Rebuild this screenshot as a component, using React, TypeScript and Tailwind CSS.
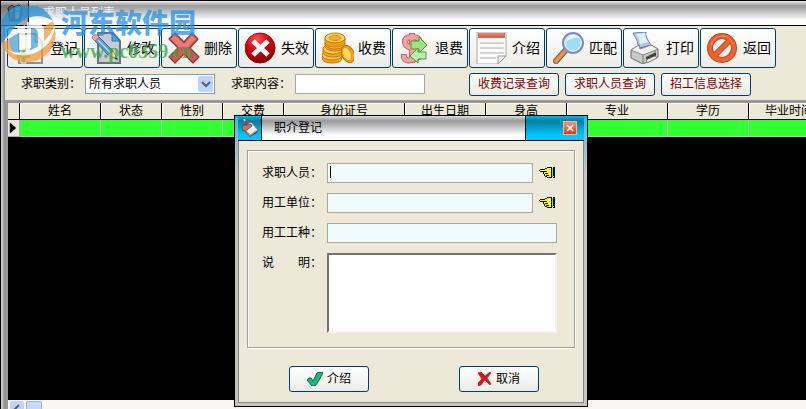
import { useState } from "react";
import type { ReactNode } from "react";

const TOOLS: { label: string; icon: ReactNode }[] = [
  { label: "登记", icon: <AddPageIcon /> },
  { label: "修改", icon: <EditPageIcon /> },
  { label: "删除", icon: <DeleteIcon /> },
  { label: "失效", icon: <InvalidIcon /> },
  { label: "收费", icon: <CoinsIcon /> },
  { label: "退费", icon: <RefundIcon /> },
  { label: "介绍", icon: <NoteIcon /> },
  { label: "匹配", icon: <MagnifierIcon /> },
  { label: "打印", icon: <PrinterIcon /> },
  { label: "返回", icon: <ForbiddenIcon /> },
];

const COLUMNS = [
  { name: "姓名", width: "w-[81px]" },
  { name: "状态", width: "w-[61px]" },
  { name: "性别", width: "w-[61px]" },
  { name: "交费", width: "w-[61px]" },
  { name: "身份证号", width: "w-[121px]" },
  { name: "出生日期", width: "w-[81px]" },
  { name: "身高", width: "w-[81px]" },
  { name: "专业", width: "w-[101px]" },
  { name: "学历", width: "w-[81px]" },
  { name: "毕业时间", width: "w-[81px]" },
];

function AddPageIcon() {
  return (
    <svg viewBox="0 0 32 32" className="size-8 shrink-0">
      <path d="M5 2h16l7 8v21H5z" fill="#f1f1f1" stroke="#8d8f93" strokeWidth="2" />
      <path d="M21 2v8h7z" fill="#d4d7da" stroke="#8a8e92" />
      <path d="M7 16h5v5h5v5h-5v5H7v-5H2v-5h5z" fill="#79b956" stroke="#eef6e8" />
    </svg>
  );
}

function EditPageIcon() {
  return (
    <svg viewBox="0 0 32 32" className="size-8 shrink-0">
      <path d="M7 1h15l7 8v22H7z" fill="#c9cad2" stroke="#6a7080" strokeWidth="2" />
      <path d="M21 1l8 8h-8z" fill="#37a8f2" stroke="#2479bb" />
      <path d="M4 9l4-4 14 14-5 4z" fill="#4f9de8" stroke="#2f66a8" />
      <path d="M7 8l13 13" stroke="#b4dcff" strokeWidth="1.5" />
      <path d="M1 6q1-4 5-3l2 2-4 4z" fill="#f0a5a5" stroke="#c06a6a" />
      <path d="M22 19l5 9-10-5z" fill="#f8dca8" stroke="#a88450" />
      <path d="M25 25l2 3-3-1z" fill="#333" />
    </svg>
  );
}

function DeleteIcon() {
  return (
    <svg viewBox="0 0 32 32" className="size-8 shrink-0">
      <path
        d="M7 1l9 9 8-9 6 6-8 9 9 9-6 6-9-9-9 9-6-6 9-9-9-9z"
        fill="#dc5656"
        stroke="#8d3434"
        strokeWidth="1.2"
        strokeLinejoin="round"
      />
      <path d="M7 3l9 9 8-9 4 4-8 8H11L3 7z" fill="#ee8a8a" opacity=".7" />
    </svg>
  );
}

function InvalidIcon() {
  return (
    <svg viewBox="0 0 32 32" className="size-8 shrink-0">
      <defs>
        <radialGradient id="redBall" cx=".4" cy=".2" r=".85">
          <stop offset="0" stopColor="#ff5252" />
          <stop offset=".5" stopColor="#d4000c" />
          <stop offset="1" stopColor="#760000" />
        </radialGradient>
      </defs>
      <circle cx="15" cy="16" r="15" fill="url(#redBall)" stroke="#8e0a0a" />
      <path d="M8 9l15 14M23 9L8 23" stroke="#fff" strokeWidth="5" />
    </svg>
  );
}

function CoinsIcon() {
  return (
    <svg viewBox="0 0 32 32" className="size-8 shrink-0" stroke="#c9720e">
      <path d="M0 23v3c0 3 4 5 10 5s10-2 10-5v-3" fill="#f0a51f" />
      <ellipse cx="10" cy="23" rx="10" ry="5" fill="#ffd253" />
      <path d="M1 17v3c0 3 4 5 10 5s9-2 9-5v-3" fill="#f0a51f" />
      <ellipse cx="11" cy="17" rx="10" ry="5" fill="#ffd253" />
      <path d="M3 11v3c0 3 4 5 10 5s9-2 9-5v-3" fill="#f0a51f" />
      <ellipse cx="13" cy="12" rx="10" ry="5" fill="#ffc940" />
      <path d="M3 6v4c0 3 4 5 10 5s10-2 10-5V6" fill="#eda01a" />
      <ellipse cx="13" cy="6" rx="10" ry="5" fill="#ffd659" />
      <ellipse cx="13" cy="6" rx="6" ry="2.5" fill="#f3b12b" stroke="#d98d17" />
      <ellipse cx="26" cy="22" rx="6" ry="9" fill="#f3a21e" transform="rotate(-24 26 22)" />
      <ellipse cx="25" cy="22" rx="4" ry="7" fill="#ffd75f" stroke="#e29a22" transform="rotate(-24 25 22)" />
    </svg>
  );
}

function RefundIcon() {
  return (
    <svg viewBox="0 0 32 32" className="size-8 shrink-0">
      <g fill="none">
        <path d="M21 10Q20 5 13 5T6 10q0 4 6 6t8 6-7 6-8-6M13 1v30" stroke="#cf5f5f" strokeWidth="6" />
        <path d="M21 9Q20 5 13 5T6 10q0 4 6 6t8 6-7 6-8-5M13 2v28" stroke="#f4a3a0" strokeWidth="4" />
      </g>
      <path d="M12 9h8V5l8 8-8 8v-4h-8z" fill="#a2e27d" stroke="#469943" />
      <path d="M27 20h-8v-4l-8 8 8 7v-4h8z" fill="#bcecaa" stroke="#469943" />
    </svg>
  );
}

function NoteIcon() {
  return (
    <svg viewBox="0 0 32 32" className="size-8 shrink-0">
      <path d="M1 0h29v24l-8 8H1z" fill="#fbfbfb" stroke="#aaa" />
      <path d="M2 1h27v5H2z" fill="#df654f" />
      <path d="M3 2h25" stroke="#f39a87" />
      <path d="M4 11h24M4 16h24M4 21h24M4 26h16" stroke="#aaa" />
      <path d="M22 32v-8h8z" fill="#eee" stroke="#999" />
    </svg>
  );
}

function MagnifierIcon() {
  return (
    <svg viewBox="0 0 32 32" className="size-8 shrink-0">
      <path d="M12 19L3 29" stroke="#6b5a57" strokeWidth="6" strokeLinecap="square" />
      <path d="M12 19L3 29" stroke="#e79542" strokeWidth="4" strokeLinecap="square" />
      <circle cx="20" cy="11" r="10" fill="#bde7ff" stroke="#8088c8" strokeWidth="2" />
      <circle cx="20" cy="11" r="8" fill="#9edcfb" stroke="#e4f6ff" />
      <path d="M13 10q1-6 8-7 3 0 5 3-6-1-13 4z" fill="#effaff" />
    </svg>
  );
}

function PrinterIcon() {
  return (
    <svg viewBox="0 0 32 32" className="size-8 shrink-0">
      <path d="M3 1l13-1q-1 5 5 13L9 17Q8 8 3 1z" fill="#a9c6f2" stroke="#698ac2" />
      <path d="M6 2l9-1q0 5 3 9l-8 2Q9 6 6 2z" fill="#e2efff" />
      <path d="M1 18l8-5 1 3 11-3 7 4v8l-15 7-12-6z" fill="#c9c9c9" stroke="#686868" />
      <path d="M1 18l12 5 15-6-7-4-11 4-1-4z" fill="#f2f2f2" stroke="#888" />
      <path d="M13 23v8" stroke="#777" />
      <path d="M16 25l10-5v4l-10 5z" fill="#414141" />
      <path d="M16 28l9-4 2 2-10 5z" fill="#eee" stroke="#777" />
      <circle cx="25" cy="20" r="1" fill="#43bf39" />
    </svg>
  );
}

function ForbiddenIcon() {
  return (
    <svg viewBox="0 0 32 32" className="size-8 shrink-0">
      <circle cx="15" cy="16" r="12" fill="#e9f1f7" stroke="#c53f16" strokeWidth="6" />
      <path d="M7 24L23 8" stroke="#c53f16" strokeWidth="6" />
      <circle cx="15" cy="16" r="12" fill="none" stroke="#ef622d" strokeWidth="4" />
      <path d="M7 24L23 8" stroke="#ef622d" strokeWidth="4" />
      <path d="M4 13Q7 4 15 4t11 8" fill="none" stroke="#ff9b6b" />
    </svg>
  );
}

function BooksIcon() {
  return (
    <svg viewBox="0 0 16 18" className="h-[18px] w-4">
      <path d="M1 4l4-3 3 3v12l-5 1z" fill="#566069" stroke="#252a30" />
      <path d="M7 3l5-2 3 3-2 12-6 1z" fill="#6699a5" stroke="#263138" />
      <path d="M3 7h3M9 5h4" stroke="#d9dde0" />
      <path d="M9 8h3v6H8z" fill="#d4d46c" />
      <path d="M4 10v5" stroke="#b45a46" strokeWidth="2" />
    </svg>
  );
}

function NotebookIcon() {
  return (
    <svg viewBox="0 0 18 18" className="size-[18px]">
      <path d="M1 9l9-5 7 7-1 3-7 4z" fill="#4b4b4b" />
      <path d="M2 8l8-5 7 8-8 6z" fill="#eee" stroke="#777" />
      <path d="M4 11l6 5M9 16l7-5" stroke="#aaa" />
      <path d="M1 8q2-3 5-2l4-1 1 2-5 4-4 1z" fill="#ba7a58" stroke="#663c2f" strokeWidth=".7" />
      <path d="M3 1l3 5" stroke="#d32717" strokeWidth="2" />
      <path d="M3 0l1 2" stroke="#f2c64a" strokeWidth="2" />
    </svg>
  );
}

function HandIcon() {
  return (
    <svg viewBox="0 0 17 12" className="h-3 w-[17px]">
      <path d="M1 3h5l2-2h4v9H8L5 9V7L4 5H1z" fill="#fff23c" />
      <path d="M0 3h1v1H0zM1 2h5v1H1zM1 4h7v1H1zM6 1h2v1H6zM8 0h4v1H8zM4 5h1v2H4zM6 6h3v1H6zM5 7h1v2H5zM7 8h3v1H7zM6 9h2v1H6zM8 10h4v1H8z" fill="#111" />
      <path d="M12 1h2v9h-2z" fill="#42dce4" />
      <path d="M12 0h1v11h-1zM14 0h2v11h-2z" fill="#111" />
      <path d="M14 9h1v1h-1z" fill="#fff" />
    </svg>
  );
}

function CheckIcon() {
  return (
    <svg viewBox="0 0 16 14" className="h-3.5 w-4">
      <path d="M0 8l2-2h2l2 3 4-8 3-1h2l1 1-5 9-3 4H5z" fill="#16bc7e" stroke="#073f2d" strokeWidth=".8" />
    </svg>
  );
}

function CancelIcon() {
  return (
    <svg viewBox="0 0 14 14" className="size-3.5">
      <path d="M0 1l3-1 4 4 5-4 1 1-4 5 4 6-1 1-5-5-4 5-3 1v-3l4-4z" fill="#f20d0d" stroke="#6c0707" strokeWidth=".5" />
    </svg>
  );
}

function Watermark() {
  return (
    <div className="pointer-events-none absolute left-0 top-1 flex items-start gap-1 opacity-75">
      <svg viewBox="0 0 56 57" className="mt-px h-[57px] w-14">
        <path d="M0 38A28 28 0 0 1 52 15Q39 7 27 12 13 18 7 31z" fill="#2792d5" />
        <path d="M0 38l18-12v21q13 2 20-12V24l14-9q6 16-2 28-9 13-24 13-16 0-22-12z" fill="#f49a3f" />
        <path d="M8 33l12-8v20l-6 2q-6-5-6-14zM29 20h9v22l-9 3z" fill="#4ca4dc" />
        <path d="M2 36q8-12 22-17v25h-6V27Q9 30 2 36zM26 16q19-2 17 13v12h-6V28q0-7-7-6v20h-4z" fill="#fff" />
        <path d="M4 42q11 8 26 2T54 19q-2 20-20 28-17 7-30-5z" fill="#fff" />
      </svg>
      <div className="flex flex-col whitespace-nowrap">
        <span className="font-['Noto_Sans_CJK_SC',sans-serif] text-[27px] font-black leading-[34px] text-[#278fe3]">河东软件园</span>
        <span className="font-['Liberation_Serif',serif] text-xl font-bold leading-6 text-[#35a344]">www.pc0359.cn</span>
      </div>
    </div>
  );
}

function QueryButton({ children }: { children: ReactNode }) {
  return (
    <button className="h-[23px] w-[90px] rounded-[3px] border border-[#003c74] bg-linear-to-b from-white to-[#ecebe6] leading-4 text-[#800000]">
      {children}
    </button>
  );
}

function RegisterDialog() {
  const [person, setPerson] = useState("");
  const [note, setNote] = useState("");
  const field = "h-5 border border-[#aca899] bg-[#f0fbff] px-0.5 outline-none";

  return (
    <div
      role="dialog"
      aria-labelledby="dialog-title"
      className="absolute left-[233px] top-[114px] w-[354px] border border-black bg-linear-to-b from-[#00bfee] from-0% via-[#c4c4c4] via-20% to-[#c4c4c4] p-[3px] pt-0"
    >
      <header className="flex h-[25px] border-b border-black bg-linear-to-b from-[#00b8e8] from-0% via-[#007f9f] via-20% to-[#00c8ff] to-80%">
        <div className="flex w-6 items-center justify-center border-r border-black">
          <NotebookIcon />
        </div>
        <h2
          id="dialog-title"
          className="flex-1 bg-linear-to-b from-[#ddd] from-0% via-[#999] via-20% to-white to-80% pl-3 text-xs font-normal leading-6"
        >
          职介登记
        </h2>
        <div className="flex w-[59px] items-center justify-end border-l border-black pr-[7px]">
          <button aria-label="关闭" className="flex size-3.5 items-center justify-center border border-[#ffb29b] bg-linear-to-b from-[#f4916c] to-[#d53a15]">
            <svg viewBox="0 0 8 8" className="size-2">
              <path d="M1 1l6 6M7 1L1 7" stroke="#fff" strokeWidth="1.6" />
            </svg>
          </button>
        </div>
      </header>

      <form className="border border-t-0 border-[#888] bg-[#ece9d8] px-2 pb-2.5 pt-[9px]" onSubmit={(e) => e.preventDefault()}>
        <div className="grid grid-cols-[65px_1fr] gap-y-2.5 border border-[#a0a09a] px-3.5 pb-3.5 pt-3 shadow-[inset_1px_1px_0_#fff,1px_1px_0_#fff]">
          <label htmlFor="person" className="leading-5">求职人员：</label>
          <div className="flex items-center gap-1.5">
            <div className="relative">
              <input
                id="person"
                value={person}
                onChange={(e) => setPerson(e.target.value)}
                className={`${field} block w-[206px]`}
              />
              {!person && <span className="pointer-events-none absolute left-[3px] top-[3px] h-3 w-px bg-black" />}
            </div>
            <button aria-label="选择求职人员"><HandIcon /></button>
          </div>
          <label htmlFor="company" className="leading-5">用工单位：</label>
          <div className="flex items-center gap-1.5">
            <input id="company" className={`${field} w-[206px]`} />
            <button aria-label="选择用工单位"><HandIcon /></button>
          </div>
          <label htmlFor="job" className="leading-5">用工工种：</label>
          <input id="job" className={`${field} w-[230px]`} />
          <label htmlFor="note" className="whitespace-pre leading-5">说　　明：</label>
          <textarea
            id="note"
            value={note}
            onChange={(e) => setNote(e.target.value)}
            className="h-20 w-[230px] resize-none border-2 border-b-[#f4f3ee] border-l-[#77736b] border-r-[#f4f3ee] border-t-[#77736b] bg-white outline-none"
          />
        </div>
        <div className="mt-[18px] flex justify-between pl-[42px] pr-9">
          <button className="flex h-[26px] w-20 items-center justify-center gap-1 rounded-[3px] border border-[#003c74] bg-linear-to-b from-white to-[#ecebe6]">
            <CheckIcon />介绍
          </button>
          <button className="flex h-[26px] w-20 items-center justify-center gap-1 rounded-[3px] border border-[#003c74] bg-linear-to-b from-white to-[#ecebe6]">
            <CancelIcon />取消
          </button>
        </div>
      </form>
    </div>
  );
}

export default function App() {
  return (
    <main lang="zh-CN" className="relative flex h-screen flex-col overflow-hidden border-l border-t border-black bg-[#ece9d8] font-['Liberation_Sans','Noto_Sans_CJK_SC',sans-serif] text-xs text-black">
      <header className="flex h-[25px] shrink-0 border-b border-black bg-linear-to-b from-[#eee] from-0% via-[#999] via-20% to-white to-80%">
        <div className="flex w-7 items-center justify-center border-r border-black bg-linear-to-b from-[#ccc] via-[#777] via-20% to-[#aaa]">
          <BooksIcon />
        </div>
        <h1 className="pl-3.5 leading-6 text-[#e6edff]">求职人员列表</h1>
      </header>

      <div className="flex min-h-0 flex-1">
        <div className="w-1 shrink-0 bg-linear-to-r from-[#ddd] to-[#888]" />
        <div className="flex min-w-0 flex-1 flex-col">
          <nav className="flex shrink-0 gap-px pl-0.5 pt-0.5">
            {TOOLS.map((tool) => (
              <button
                key={tool.label}
                className="flex h-10 w-[76px] shrink-0 items-center gap-1 whitespace-nowrap rounded-[3px] border border-[#003c74] bg-linear-to-b from-white to-[#ecebe6] pl-1.5 text-sm"
              >
                {tool.icon}
                {tool.label}
              </button>
            ))}
          </nav>

          <div className="flex h-8 shrink-0 items-center pl-4">
            <label htmlFor="category" className="w-16 shrink-0">求职类别：</label>
            <div className="relative">
              <select id="category" className="block h-5 w-[130px] appearance-none border border-[#7f9db9] bg-white pl-[3px] leading-4 outline-none">
                <option>所有求职人员</option>
              </select>
              <span className="pointer-events-none absolute right-0.5 top-0.5 flex h-4 w-[15px] items-center justify-center rounded-xs bg-[#c1d3fb]">
                <svg viewBox="0 0 10 8" className="h-2 w-2.5">
                  <path d="M1 2l4 4 4-4" fill="none" stroke="#4d6185" strokeWidth="2" />
                </svg>
              </span>
            </div>
            <label htmlFor="content" className="ml-4 w-16 shrink-0">求职内容：</label>
            <input id="content" className="h-5 w-[130px] border border-[#aca899] bg-white px-1 outline-none" />
            <div className="ml-11 flex shrink-0 gap-1.5">
              <QueryButton>收费记录查询</QueryButton>
              <QueryButton>求职人员查询</QueryButton>
              <QueryButton>招工信息选择</QueryButton>
            </div>
          </div>

          <section className="min-h-0 flex-1 overflow-hidden border-l-[3px] border-t-[3px] border-[#969696] bg-black">
            <table className="w-[822px] table-fixed border-separate border-spacing-0">
              <thead>
                <tr className="bg-[#ece9d8]">
                  <th className="w-3 border-b border-r border-black p-0" />
                  {COLUMNS.map((col) => (
                    <th key={col.name} className={`${col.width} border-b border-r border-black p-0 font-normal leading-4 shadow-[inset_1px_1px_0_#fff]`}>
                      {col.name}
                    </th>
                  ))}
                </tr>
              </thead>
              <tbody>
                <tr className="bg-[#33ff33]">
                  <td className="border-b border-r border-[#aaa] bg-[#ece9d8] p-0">
                    <svg viewBox="0 0 12 16" className="block h-4 w-[11px]">
                      <path d="M2 2v12l7-6z" />
                    </svg>
                  </td>
                  {COLUMNS.map((col) => (
                    <td key={col.name} className="border-b border-r border-[#c0c0c0] p-0" />
                  ))}
                </tr>
              </tbody>
            </table>
          </section>

          <div className="flex h-[9px] shrink-0 gap-0.5 overflow-hidden border-l-[3px] border-[#969696] bg-[#f7f6f0] pl-0.5 pt-px">
            <button aria-label="向左滚动" className="flex h-4 w-3.5 items-center justify-center rounded-xs bg-[#c1d3fb]">
              <svg viewBox="0 0 8 10" className="h-2.5 w-2">
                <path d="M6 1L2 5l4 4" fill="none" stroke="#4d6185" strokeWidth="2" />
              </svg>
            </button>
            <div className="h-4 w-4 rounded-xs border border-[#98b4ee] bg-[#c8d7fc]" />
          </div>
        </div>
      </div>

      <Watermark />
      <RegisterDialog />
    </main>
  );
}
